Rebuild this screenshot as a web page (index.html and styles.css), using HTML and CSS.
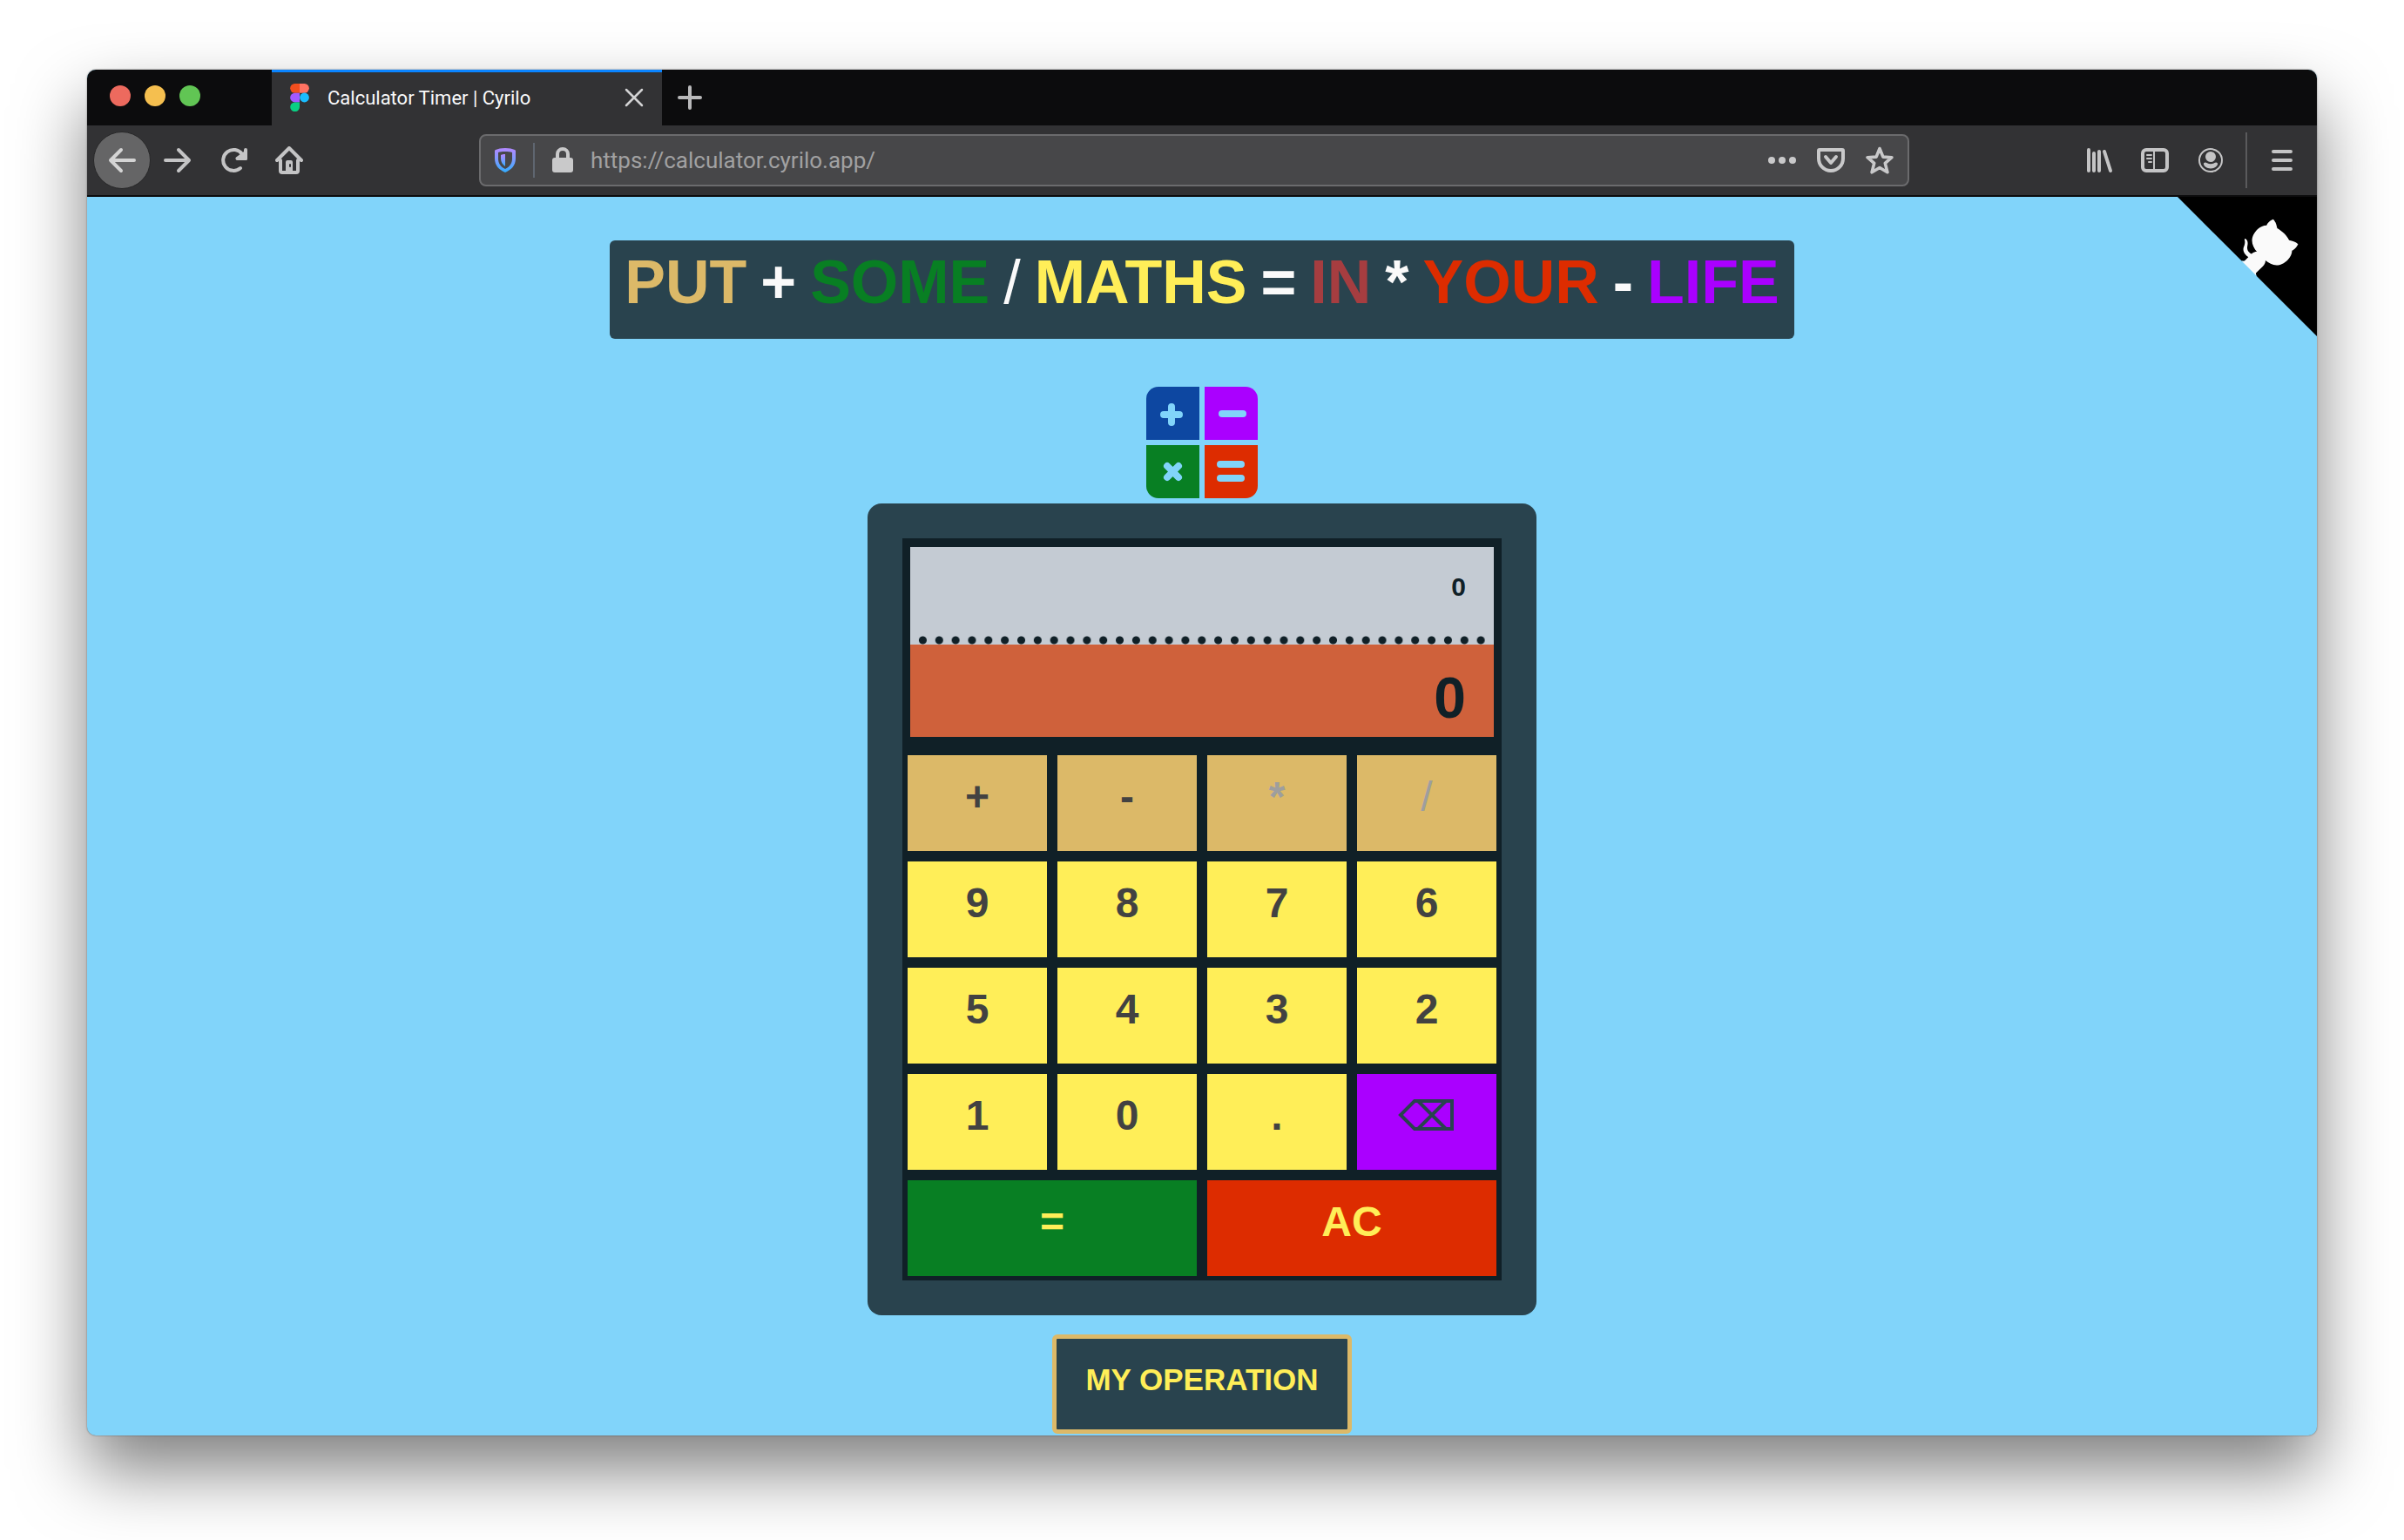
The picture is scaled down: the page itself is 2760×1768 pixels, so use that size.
FILE: index.html
```html
<!DOCTYPE html>
<html lang="en">
<head>
<meta charset="utf-8">
<meta name="viewport" content="width=device-width, initial-scale=1">
<title>Calculator Timer | Cyrilo</title>
<link rel="stylesheet" href="styles.css">
</head>
<body>
<div class="window">
  <header class="tabbar">
    <div class="lights">
      <button class="light light-close" aria-label="Close window"></button>
      <button class="light light-min" aria-label="Minimise window"></button>
      <button class="light light-max" aria-label="Zoom window"></button>
    </div>
    <div class="tab">
      <svg width="22" height="32" viewBox="0 0 22 32" aria-hidden="true">
        <path fill="#f24e1e" d="M5.500 0H11V10.700H5.500A5.350 5.350 0 0 1 5.500 0z"/>
        <path fill="#ff7262" d="M11 0H16.500A5.350 5.350 0 0 1 16.500 10.700H11z"/>
        <path fill="#a259ff" d="M5.500 10.700H11V21.400H5.500A5.350 5.350 0 0 1 5.500 10.700z"/>
        <circle fill="#1abcfe" cx="16.500" cy="16" r="5.400"/>
        <path fill="#0acf83" d="M5.500 21.400H11V26.600A5.400 5.400 0 1 1 5.500 21.400z"/>
      </svg>
      <span class="tab-title">Calculator Timer | Cyrilo</span>
      <button class="icon-btn" aria-label="Close tab">
        <svg width="22" height="22" viewBox="0 0 22 22" fill="none" stroke="#d2d2d3" stroke-width="2.500" stroke-linecap="round"><path d="M2 2l18 18M20 2L2 20"/></svg>
      </button>
    </div>
    <button class="icon-btn new-tab" aria-label="New tab">
      <svg width="28" height="28" viewBox="0 0 28 28" fill="none" stroke="#b9b9ba" stroke-width="4" stroke-linecap="round"><path d="M14 2v24M2 14h24"/></svg>
    </button>
  </header>

  <nav class="toolbar" aria-label="Browser">
    <div class="nav-group">
      <button class="icon-btn back" aria-label="Back">
        <svg width="32" height="32" viewBox="0 0 32 32" fill="none" stroke="#d4d4d4" stroke-width="4" stroke-linecap="round" stroke-linejoin="round"><path d="M30 16H3M15 4L3 16l12 12"/></svg>
      </button>
      <button class="icon-btn" aria-label="Forward">
        <svg width="32" height="32" viewBox="0 0 32 32" fill="none" stroke="#c4c4c5" stroke-width="4" stroke-linecap="round" stroke-linejoin="round"><path d="M2 16h27M17 4l12 12-12 12"/></svg>
      </button>
      <button class="icon-btn" aria-label="Reload">
        <svg width="32" height="32" viewBox="0 0 32 32" fill="none" stroke="#c4c4c5" stroke-width="4" stroke-linecap="round"><path d="M24 25A12 12 0 1 1 26 9"/><path fill="#c4c4c5" stroke="none" d="M28 4a2 2 0 0 1 4 0V14.500a1.500 1.500 0 0 1-1.500 1.500H20.500a2 2 0 0 1-1.500-3.400L28 6z"/></svg>
      </button>
      <button class="icon-btn" aria-label="Home">
        <svg width="32" height="32" viewBox="0 0 32 32" fill="none" stroke="#c4c4c5" stroke-width="4" stroke-linecap="round" stroke-linejoin="round"><path d="M2 16L16 2l14 14"/><path d="M6 16v12a2 2 0 0 0 2 2h16a2 2 0 0 0 2-2V16"/><path stroke="none" fill="#c4c4c5" d="M12 28V18a2 2 0 0 1 2-2h4a2 2 0 0 1 2 2v10z"/><path d="M17 21v2" stroke="#323234" stroke-width="2"/></svg>
      </button>
    </div>

    <div class="urlbar">
      <svg width="24" height="28" viewBox="0 0 24 28" aria-hidden="true">
        <defs><linearGradient id="shield" x1="0" y1="0" x2="0" y2="1"><stop offset="0" stop-color="#b388ff"/><stop offset=".5" stop-color="#7a9bff"/><stop offset="1" stop-color="#32adff"/></linearGradient></defs>
        <path fill="url(#shield)" fill-rule="evenodd" d="M12 0C17 0 20 .8 23 2c.7.300 1 .8 1 1.500V12c0 8-5 13-12 16C5 25 0 20 0 12V3.500C0 2.800.3 2.300 1 2 4 .8 7 0 12 0zM12 4C9 4 6 4.400 4 5v7c0 6 3 9.500 8 12 5-2.500 8-6 8-12V5c-2-.6-5-1-8-1z"/>
        <path fill="url(#shield)" d="M12 7v14c-3-2-5-5-5-9V8c1.500-.6 3-.9 5-1z"/>
      </svg>
      <span class="url-sep"></span>
      <svg width="24" height="30" viewBox="0 0 24 30" aria-hidden="true"><rect y="12" width="24" height="17" rx="3" fill="#c9c9ca"/><path d="M6 13V8a6 6 0 0 1 12 0v5" fill="none" stroke="#c9c9ca" stroke-width="4"/></svg>
      <input class="url-input" type="text" value="https://calculator.cyrilo.app/" aria-label="Address">
      <div class="url-actions">
        <button class="icon-btn" aria-label="Page actions"><svg width="32" height="32" viewBox="0 0 32 32" fill="#c9c9ca"><circle cx="4" cy="16" r="4"/><circle cx="16" cy="16" r="4"/><circle cx="28" cy="16" r="4"/></svg></button>
        <button class="icon-btn" aria-label="Save to Pocket"><svg width="32" height="32" viewBox="0 0 32 32" fill="none" stroke="#c9c9ca" stroke-width="4" stroke-linecap="round" stroke-linejoin="round"><path d="M3 4h26a1 1 0 0 1 1 1v9a14 14 0 0 1-28 0V5a1 1 0 0 1 1-1z"/><path d="M10 12l6 7 6-7"/></svg></button>
        <button class="icon-btn" aria-label="Bookmark"><svg width="32" height="32" viewBox="0 0 32 32" fill="none" stroke="#c9c9ca" stroke-width="3.600" stroke-linejoin="round"><path d="M16 2.500l3.900 9.600 10 .6-7.600 6.700 2.600 10.400L16 24.500l-8.900 5.300 2.600-10.400-7.600-6.700 10-.6z"/></svg></button>
      </div>
    </div>

    <div class="tool-group">
      <button class="icon-btn" aria-label="Library"><svg width="32" height="32" viewBox="0 0 32 32" fill="none" stroke="#c4c4c5" stroke-width="4" stroke-linecap="round"><path d="M4 4v24M10 8v20M16 6v22M22 6l7 22"/></svg></button>
      <button class="icon-btn" aria-label="Sidebar"><svg width="32" height="32" viewBox="0 0 32 32" fill="none" stroke="#c4c4c5"><rect x="2" y="4" width="28" height="24" rx="4" stroke-width="4"/><path d="M15 5v22" stroke-width="2"/><path d="M7 10h5M7 14h5M9 18h3" stroke-width="2" stroke-linecap="round"/></svg></button>
      <button class="icon-btn" aria-label="Account"><svg width="32" height="32" viewBox="0 0 32 32" fill="#c4c4c5"><circle cx="16" cy="16" r="13" fill="none" stroke="#c4c4c5" stroke-width="2"/><circle cx="16" cy="12" r="6"/><path d="M8 19.500c1-1.300 2.500-1.200 4-.3 2.500 1.500 5.500 1.500 8 0 1.500-.9 3-1 4 .3.500 3-3.500 6-8 6s-8.500-3-8-6z"/></svg></button>
    </div>
    <div class="menu-group">
      <button class="icon-btn" aria-label="Menu"><svg width="24" height="24" viewBox="0 0 24 24" fill="none" stroke="#c4c4c5" stroke-width="4" stroke-linecap="round"><path d="M2 2h20M2 12h20M2 22h20"/></svg></button>
    </div>
  </nav>

  <main class="page">
    <a class="corner" href="#" aria-label="View source on GitHub">
      <svg width="160" height="160" viewBox="0 0 250 250" aria-hidden="true">
        <path d="M0,0 L115,115 L130,115 L142,142 L250,250 L250,0 Z"/>
        <path fill="#fafafa" d="M128.3,109.0 C113.8,99.7 119.0,89.6 119.0,89.6 C122.0,82.7 120.5,78.6 120.5,78.6 C119.2,72.0 123.4,76.3 123.4,76.3 C127.3,80.9 125.5,87.3 125.5,87.3 C122.9,97.6 130.6,101.9 134.4,103.2"/>
        <path fill="#fafafa" d="M115.0,115.0 C114.9,115.1 118.7,116.5 119.8,115.4 L133.7,101.6 C136.9,99.2 139.9,98.4 142.2,98.6 C133.8,88.0 127.5,74.4 143.8,58.0 C148.5,53.4 154.0,51.2 159.7,51.0 C160.3,49.4 163.2,43.6 171.4,40.1 C171.4,40.1 176.1,42.5 178.8,56.2 C183.1,58.6 187.2,61.8 190.9,65.4 C194.5,69.0 197.7,73.2 200.1,77.6 C213.8,80.2 216.3,84.9 216.3,84.9 C212.7,93.1 206.9,96.0 205.4,96.6 C205.1,102.4 203.0,107.8 198.3,112.5 C181.9,128.9 168.3,122.5 157.7,114.1 C157.9,116.9 156.7,120.9 152.7,124.9 L141.0,136.5 C139.8,137.7 141.6,141.9 141.8,141.8 Z"/>
      </svg>
    </a>

    <h1 class="headline">
      <span class="w-gold">PUT</span>
      <span>+</span>
      <span class="w-green">SOME</span>
      <span class="thin">/</span>
      <span class="w-yellow">MATHS</span>
      <span>=</span>
      <span class="w-brick">IN</span>
      <span>*</span>
      <span class="w-red">YOUR</span>
      <span>-</span>
      <span class="w-purple">LIFE</span>
    </h1>

    <svg class="logo" width="128" height="128" viewBox="0 0 128 128" role="img" aria-label="Calculator">
      <path fill="#0d47a1" d="M14 0H61V61H0V14A14 14 0 0 1 14 0z"/>
      <path fill="#aa00ff" d="M67 0H114A14 14 0 0 1 128 14V61H67z"/>
      <path fill="#087f23" d="M0 67H61V128H14A14 14 0 0 1 0 114z"/>
      <path fill="#dd2c00" d="M67 67H128V114A14 14 0 0 1 114 128H67z"/>
      <path fill="none" stroke="#81d4fa" stroke-width="8" stroke-linecap="round" d="M29 23v18M20 32h18M87 31h24M24 91l13 13M37 91L24 104M85 89h24M85 105h24"/>
    </svg>

    <section class="calculator" aria-label="Calculator">
      <div class="panel">
        <div class="screen">
          <output class="history">0</output>
          <div class="dots"></div>
          <output class="result">0</output>
        </div>
        <div class="keys">
          <button class="key key-op">+</button>
          <button class="key key-op">-</button>
          <button class="key key-op" disabled>*</button>
          <button class="key key-op thin" disabled>/</button>
          <button class="key">9</button>
          <button class="key">8</button>
          <button class="key">7</button>
          <button class="key">6</button>
          <button class="key">5</button>
          <button class="key">4</button>
          <button class="key">3</button>
          <button class="key">2</button>
          <button class="key">1</button>
          <button class="key">0</button>
          <button class="key">.</button>
          <button class="key key-delete" aria-label="Delete"><svg width="66" height="36" viewBox="0 0 66 36" fill="none" stroke="#29434e" stroke-width="4"><path d="M19 2H62V34H19L3 18z"/><path d="M23 2l32 32M55 2L23 34"/></svg></button>
          <button class="key key-wide key-equals">=</button>
          <button class="key key-wide key-clear">AC</button>
        </div>
      </div>
    </section>

    <button class="operation">MY OPERATION</button>
  </main>
</div>
</body>
</html>
```

FILE: styles.css
```css
* {
  box-sizing: border-box;
}

body {
  margin: 0;
  min-height: 100vh;
  padding: 80px 100px 120px;
  display: flex;
  background: #fff;
  font-family: "Liberation Sans", Arial, sans-serif;
}

button {
  margin: 0;
  padding: 0;
  border: 0;
  font: inherit;
  cursor: pointer;
}

svg {
  display: block;
  flex: none;
}

.window {
  flex: 1;
  min-width: 0;
  display: flex;
  flex-direction: column;
  border-radius: 10px;
  overflow: hidden;
  background: #81d4fa;
  box-shadow: 0 0 2px rgba(0, 0, 0, 0.5), 0 40px 80px rgba(0, 0, 0, 0.5);
}

/* Browser tab strip */
.tabbar {
  display: flex;
  height: 64px;
  background: #0c0c0d;
}

.lights {
  width: 212px;
  display: flex;
  align-items: center;
  gap: 16px;
  padding: 0 26px 4px;
}

.light {
  width: 24px;
  height: 24px;
  border-radius: 50%;
}

.light-close { background: #ed6a5e; }
.light-min { background: #f5bf4f; }
.light-max { background: #61c554; }

.tab {
  width: 448px;
  display: flex;
  align-items: center;
  padding: 0 21px 3px;
  border-top: 3px solid #0a84ff;
  background: #323234;
  font-family: Roboto, sans-serif;
  font-size: 22px;
  color: #f9f9fa;
}

.tab-title {
  flex: 1;
  padding-left: 21px;
}

.icon-btn {
  display: flex;
  align-items: center;
  justify-content: center;
  background: none;
}

.new-tab {
  width: 64px;
}

/* Browser toolbar */
.toolbar {
  display: flex;
  align-items: center;
  height: 82px;
  border-bottom: 2px solid #0c0c0d;
  background: #323234;
}

.nav-group {
  width: 450px;
  display: flex;
  align-items: center;
  gap: 32px;
  padding-left: 7px;
}

.back {
  width: 66px;
  height: 66px;
  margin-right: -17px;
  border: 1px solid #282829;
  border-radius: 50%;
  background: #656566;
}

.urlbar {
  flex: 1;
  min-width: 0;
  display: flex;
  align-items: center;
  height: 60px;
  padding: 0 16px;
  border: 2px solid #6b6b6d;
  border-radius: 8px;
  background: #474749;
}

.url-sep {
  width: 2px;
  height: 40px;
  margin: 0 20px;
  background: #5f6670;
}

.url-input {
  flex: 1;
  min-width: 0;
  padding: 0 0 0 20px;
  border: 0;
  background: none;
  font-family: Roboto, sans-serif;
  font-size: 26px;
  color: #a1a1a2;
}

.url-actions {
  display: flex;
  gap: 24px;
}

.tool-group {
  display: flex;
  gap: 32px;
  padding: 0 24px 0 202px;
}

.menu-group {
  display: flex;
  align-items: center;
  height: 64px;
  padding: 0 28px;
  border-left: 2px solid #5a5a5c;
}

/* Web page */
.page {
  flex: 1;
  position: relative;
  display: flex;
  flex-direction: column;
  align-items: center;
  padding: 50px 20px 0;
}

.corner {
  position: absolute;
  top: 0;
  right: 0;
}

.headline {
  display: flex;
  flex-wrap: wrap;
  justify-content: center;
  column-gap: 16px;
  margin: 0;
  padding: 8px 17px 25px;
  border-radius: 6px;
  background: #29434e;
  color: #fafafa;
  font-size: 70px;
  line-height: 80px;
  font-weight: 700;
}

.w-gold { color: #dcb968; }
.w-green { color: #087f23; }
.w-yellow { color: #ffee58; }
.w-brick { color: #a63d40; }
.w-red { color: #dd2c00; }
.w-purple { color: #aa00ff; }

.thin {
  font-weight: 400;
}

.logo {
  margin: 55px 0 6px;
}

.calculator {
  width: 100%;
  max-width: 768px;
  padding: 40px;
  border-radius: 16px;
  background: #29434e;
}

.panel {
  padding: 10px 6px 5px;
  background: #102027;
}

.screen {
  margin: 0 3px 21px;
  color: #102027;
  font-weight: 700;
  text-align: right;
}

.history,
.result {
  display: block;
  padding-right: 32px;
}

.history {
  height: 102px;
  padding-top: 30px;
  background: #c4cbd3;
  font-size: 30px;
  line-height: 32px;
}

.dots {
  height: 10px;
  padding: 0 5px;
  background: radial-gradient(circle, #102027 4px, transparent 5px) 0 0 / 19px 10px round content-box, #c4cbd3;
}

.result {
  height: 106px;
  padding-top: 23px;
  background: #cf613b;
  font-size: 66px;
  line-height: 76px;
}

.keys {
  display: grid;
  grid-template-columns: repeat(4, 1fr);
  grid-auto-rows: 110px;
  gap: 12px;
  font-weight: 700;
}

.key {
  display: flex;
  align-items: center;
  justify-content: center;
  padding-bottom: 16px;
  background: #ffee58;
  color: #424242;
  font-size: 48px;
}

.key.thin { font-weight: 400; }
.key-op { background: #dcb968; }
.key-op:disabled { color: #9e9e9e; }
.key-delete { background: #aa00ff; }
.key-wide { grid-column: span 2; color: #ffee58; }
.key-equals { background: #087f23; }
.key-clear { background: #dd2c00; }

.operation {
  margin-top: 22px;
  padding: 25px 33px 35px;
  border: 5px solid #dcb968;
  border-radius: 6px;
  background: #29434e;
  color: #ffee58;
  font-size: 35px;
  line-height: 44px;
  font-weight: 700;
}
```
